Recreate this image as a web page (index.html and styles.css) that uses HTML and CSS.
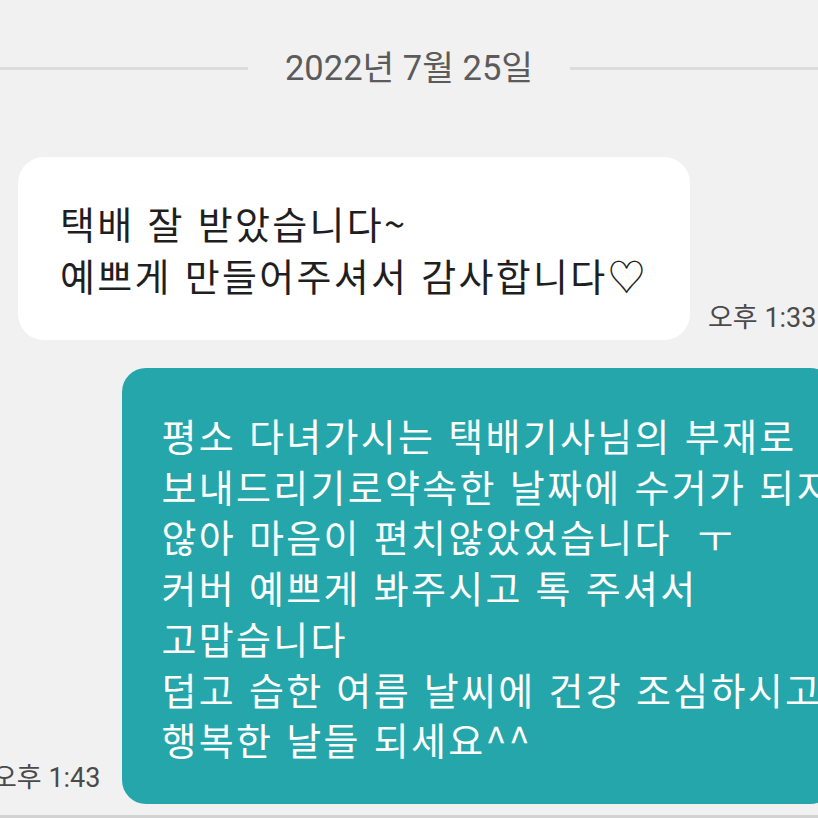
FILE: index.html
```html
<!DOCTYPE html>
<html lang="ko">
<head>
  <meta charset="UTF-8">
  <title>채팅</title>
  <link rel="stylesheet" href="styles.css">
</head>
<body>
  <div class="chat">

    <div class="date-divider">
      <span class="date-line"></span>
      <span class="date-text">2022년 7월 25일</span>
      <span class="date-line"></span>
    </div>

    <div class="row row-in">
      <div class="bubble bubble-in">
        택배 잘 받았습니다~<br>
        예쁘게 만들어주셔서 감사합니다♡
      </div>
      <span class="time">오후 1:33</span>
    </div>

    <div class="row row-out">
      <span class="time">오후 1:43</span>
      <div class="bubble bubble-out">
        평소 다녀가시는 택배기사님의 부재로<br>
        보내드리기로약속한 날짜에 수거가 되지<br>
        않아 마음이 편치않았었습니다 &nbsp;ㅜ<br>
        커버 예쁘게 봐주시고 톡 주셔서<br>
        고맙습니다<br>
        덥고 습한 여름 날씨에 건강 조심하시고<br>
        행복한 날들 되세요^^
      </div>
    </div>

  </div>
  <div class="bottom-edge"></div>
</body>
</html>
```

FILE: styles.css
```css
html, body { margin: 0; padding: 0; }
body {
  width: 818px; height: 818px; overflow: hidden;
  background: #f1f1f1; position: relative;
  font-family: "Noto Sans CJK KR", sans-serif;
}
.chat { padding-top: 46px; height: 769px; overflow: hidden; }

.date-divider { display: flex; align-items: center; gap: 37px; height: 44px; }
.date-line { flex: 1; height: 3px; background: #dcdcdc; }
.date-text {
  font-family: "Roboto", "Noto Sans CJK KR", sans-serif;
  font-size: 34.5px; color: #5b5b5b; line-height: 44px;
}

.row { display: flex; align-items: flex-end; white-space: nowrap; }
.row-in { margin: 67px 0 0 18px; }
.row-out { margin: 28px 0 0 0; }

.bubble { font-size: 38px; letter-spacing: 2.3px; line-height: 52px; }
.bubble-in {
  background: #ffffff; color: #1f1f1f;
  width: 630px; padding: 40px 0 39px 42px;
  border-radius: 26px;
}
.bubble-out {
  background: #25a6aa; color: #ffffff;
  width: 760px; padding: 42px 0 39px 39px;
  border-radius: 24px; line-height: 50.7px;
  margin-left: 22px;
}

.time {
  font-family: "Roboto", "Noto Sans CJK KR", sans-serif;
  font-size: 27px; color: #4a4a4a; line-height: 32px;
  margin: 0 0 6px 18px;
}
.row-out .time { margin: 0 0 10px -8px; }

.bottom-edge { position: absolute; left: 0; right: 0; bottom: 0; height: 3px; background: #d2d2d2; }
```
